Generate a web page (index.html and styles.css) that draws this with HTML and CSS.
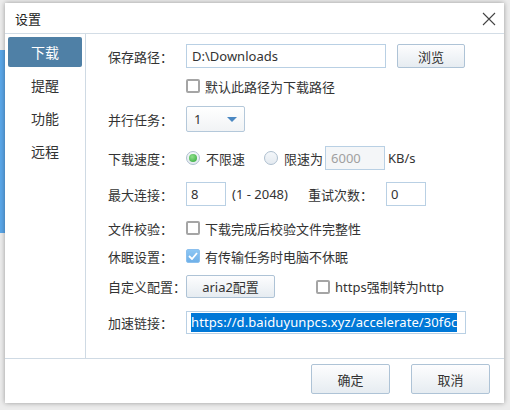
FILE: index.html
```html
<!DOCTYPE html>
<html lang="zh-CN">
<head>
<meta charset="utf-8">
<title>设置</title>
<link rel="stylesheet" href="styles.css">
</head>
<body>
<div class="dialog">
  <div class="titlebar">
    <span class="title">设置</span>
    <span class="close"><svg width="14" height="14" viewBox="0 0 14 14"><path d="M1 1 L13 13 M13 1 L1 13" stroke="#444" stroke-width="1.1" fill="none"/></svg></span>
  </div>
  <div class="main">
    <div class="sidebar">
      <div class="nav active">下载</div>
      <div class="nav">提醒</div>
      <div class="nav">功能</div>
      <div class="nav">远程</div>
    </div>
    <div class="content">
      <div class="row r1">
        <span class="label">保存路径：</span>
        <div class="input path">D:\Downloads</div>
        <div class="btn browse">浏览</div>
      </div>
      <div class="row r2">
        <span class="label"></span>
        <span class="check"></span><span class="ctext">默认此路径为下载路径</span>
      </div>
      <div class="row r3">
        <span class="label">并行任务：</span>
        <div class="select"><span>1</span><span class="arrow"></span></div>
      </div>
      <div class="row r4">
        <span class="label">下载速度：</span>
        <span class="radio on"></span><span class="rtext">不限速</span>
        <span class="radio off"></span><span class="rtext">限速为</span>
        <div class="input speed">6000</div>
        <span class="unit">KB/s</span>
      </div>
      <div class="row r5">
        <span class="label">最大连接：</span>
        <div class="input small">8</div>
        <span class="range">(1 - 2048)</span>
        <span class="label2">重试次数：</span>
        <div class="input small">0</div>
      </div>
      <div class="row r6">
        <span class="label">文件校验：</span>
        <span class="check"></span><span class="ctext">下载完成后校验文件完整性</span>
      </div>
      <div class="row r7">
        <span class="label">休眠设置：</span>
        <span class="check checked"><svg width="10" height="8" viewBox="0 0 10 8"><path d="M1 4 L4 7 L9 1" stroke="#fff" stroke-width="1.8" fill="none"/></svg></span><span class="ctext">有传输任务时电脑不休眠</span>
      </div>
      <div class="row r8">
        <span class="label">自定义配置：</span>
        <div class="btn aria">aria2配置</div>
        <span class="check https"></span><span class="ctext">https强制转为http</span>
      </div>
      <div class="row r9">
        <span class="label">加速链接：</span>
        <div class="input url"><span class="sel">https://d.baiduyunpcs.xyz/accelerate/30f6c</span></div>
      </div>
    </div>
  </div>
  <div class="footer">
    <div class="btn fbtn">确定</div>
    <div class="btn fbtn">取消</div>
  </div>
</div>
</body>
</html>
```
FILE: styles.css
```css
html, body {
  margin: 0;
  padding: 0;
}
body {
  width: 510px;
  height: 410px;
  overflow: hidden;
  background:
    linear-gradient(#5aa6e8, #5aa6e8) 0 50px / 5px 183px no-repeat,
    #ececec;
  font-family: "Noto Sans", "Noto Sans CJK SC", sans-serif;
  font-size: 13px;
  color: #333;
  padding-top: 3px;
  padding-left: 5px;
  box-sizing: border-box;
}
.dialog {
  width: 499px;
  height: 400px;
  background: #fff;
  box-shadow: 0 0 5px rgba(0, 0, 0, 0.35);
  display: flex;
  flex-direction: column;
}
.titlebar {
  height: 30px;
  border-bottom: 1px solid #d3dde6;
  display: flex;
  align-items: center;
  justify-content: space-between;
  padding: 0 8px 0 10px;
  flex: none;
}
.title {
  font-family: "Noto Sans CJK SC", sans-serif;
  font-size: 13px;
  color: #222;
}
.close {
  display: flex;
  margin-top: 1px;
}
.main {
  height: 324px;
  display: flex;
  flex: none;
}
.sidebar {
  width: 81px;
  box-sizing: border-box;
  border-right: 1px solid #cfdae4;
  padding: 3px 3px 0 3px;
  display: flex;
  flex-direction: column;
  gap: 3px;
}
.nav {
  height: 30px;
  border-radius: 2px;
  display: flex;
  align-items: center;
  justify-content: center;
  font-family: "Noto Sans CJK SC", sans-serif;
  font-size: 14px;
  color: #333;
}
.nav.active {
  background: #4f80a6;
  color: #fff;
}
.content {
  flex: 1;
  padding: 10px 0 0 22px;
  display: flex;
  flex-direction: column;
}
.row {
  display: flex;
  align-items: center;
}
.r1 { height: 24px; }
.r2 { height: 20px; margin-top: 8px; }
.r3 { height: 26px; margin-top: 10px; }
.r4 { height: 24px; margin-top: 14px; }
.r5 { height: 24px; margin-top: 12px; }
.r6 { height: 20px; margin-top: 12px; }
.r7 { height: 20px; margin-top: 8px; }
.r8 { height: 23px; margin-top: 9px; }
.r9 { height: 23px; margin-top: 13px; }
.label {
  width: 78px;
  flex: none;
  font-family: "Noto Sans CJK SC", sans-serif;
  white-space: nowrap;
}
.label2 {
  font-family: "Noto Sans CJK SC", sans-serif;
  width: 78px;
  flex: none;
}
.input {
  height: 100%;
  box-sizing: border-box;
  border: 1px solid #b9d0e4;
  background: #fff;
  display: flex;
  align-items: center;
  padding-left: 5px;
  white-space: nowrap;
  overflow: hidden;
}
.path { width: 200px; }
.speed {
  width: 60px;
  background: #f4f6f8;
  color: #a0a0a0;
  margin-left: 2px;
}
.small { width: 40px; padding-left: 4px; }
.url {
  width: 280px;
  padding-left: 4px;
}
.sel {
  background: #0078d7;
  color: #fff;
  line-height: 19px;
  font-size: 13px;
  letter-spacing: 0.1px;
}
.unit { margin-left: 3px; }
.range { margin-left: 6px; width: 76px; }
.btn {
  box-sizing: border-box;
  border: 1px solid #aec3d6;
  border-radius: 2px;
  background: linear-gradient(#fdfdfe, #e6ecf1);
  display: flex;
  align-items: center;
  justify-content: center;
  font-family: "Noto Sans CJK SC", sans-serif;
  color: #333;
}
.browse {
  width: 68px;
  height: 24px;
  margin-left: 11px;
}
.aria {
  width: 89px;
  height: 23px;
  font-family: "Noto Sans", "Noto Sans CJK SC", sans-serif;
}
.check {
  width: 14px;
  height: 14px;
  box-sizing: border-box;
  border: 2px solid #a5a5a5;
  border-radius: 2px;
  background: #fff;
  flex: none;
  display: flex;
  align-items: center;
  justify-content: center;
}
.check.checked {
  border: 1px solid #8cc0ee;
  background: linear-gradient(#8cc6f4, #6fb0e8);
}
.https { margin-left: 41px; }
.ctext {
  margin-left: 5px;
  font-family: "Noto Sans", "Noto Sans CJK SC", sans-serif;
}
.select {
  width: 59px;
  height: 26px;
  box-sizing: border-box;
  border: 1px solid #b4c8da;
  border-radius: 2px;
  background: linear-gradient(#fff, #f1f3f5);
  display: flex;
  align-items: center;
  justify-content: space-between;
  padding: 0 7px 0 7px;
}
.arrow {
  width: 0;
  height: 0;
  border-left: 5px solid transparent;
  border-right: 5px solid transparent;
  border-top: 5px solid #4a88c2;
  margin-top: 1px;
}
.radio {
  width: 14px;
  height: 14px;
  border-radius: 50%;
  box-sizing: border-box;
  border: 1px solid #aebfcf;
  background: linear-gradient(#f4f7fa, #e4eaf0);
  flex: none;
  display: flex;
  align-items: center;
  justify-content: center;
}
.radio.on::after {
  content: "";
  width: 8px;
  height: 8px;
  border-radius: 50%;
  background: radial-gradient(circle at 40% 35%, #8ee08a, #2fa63a);
}
.radio.off { margin-left: 19px; }
.rtext {
  margin-left: 6px;
  font-family: "Noto Sans CJK SC", sans-serif;
}
.footer {
  flex: 1;
  border-top: 1px solid #cfdae4;
  display: flex;
  justify-content: flex-end;
  align-items: flex-start;
  padding: 5px 14px 0 0;
  gap: 21px;
}
.fbtn {
  width: 79px;
  height: 30px;
}
```
